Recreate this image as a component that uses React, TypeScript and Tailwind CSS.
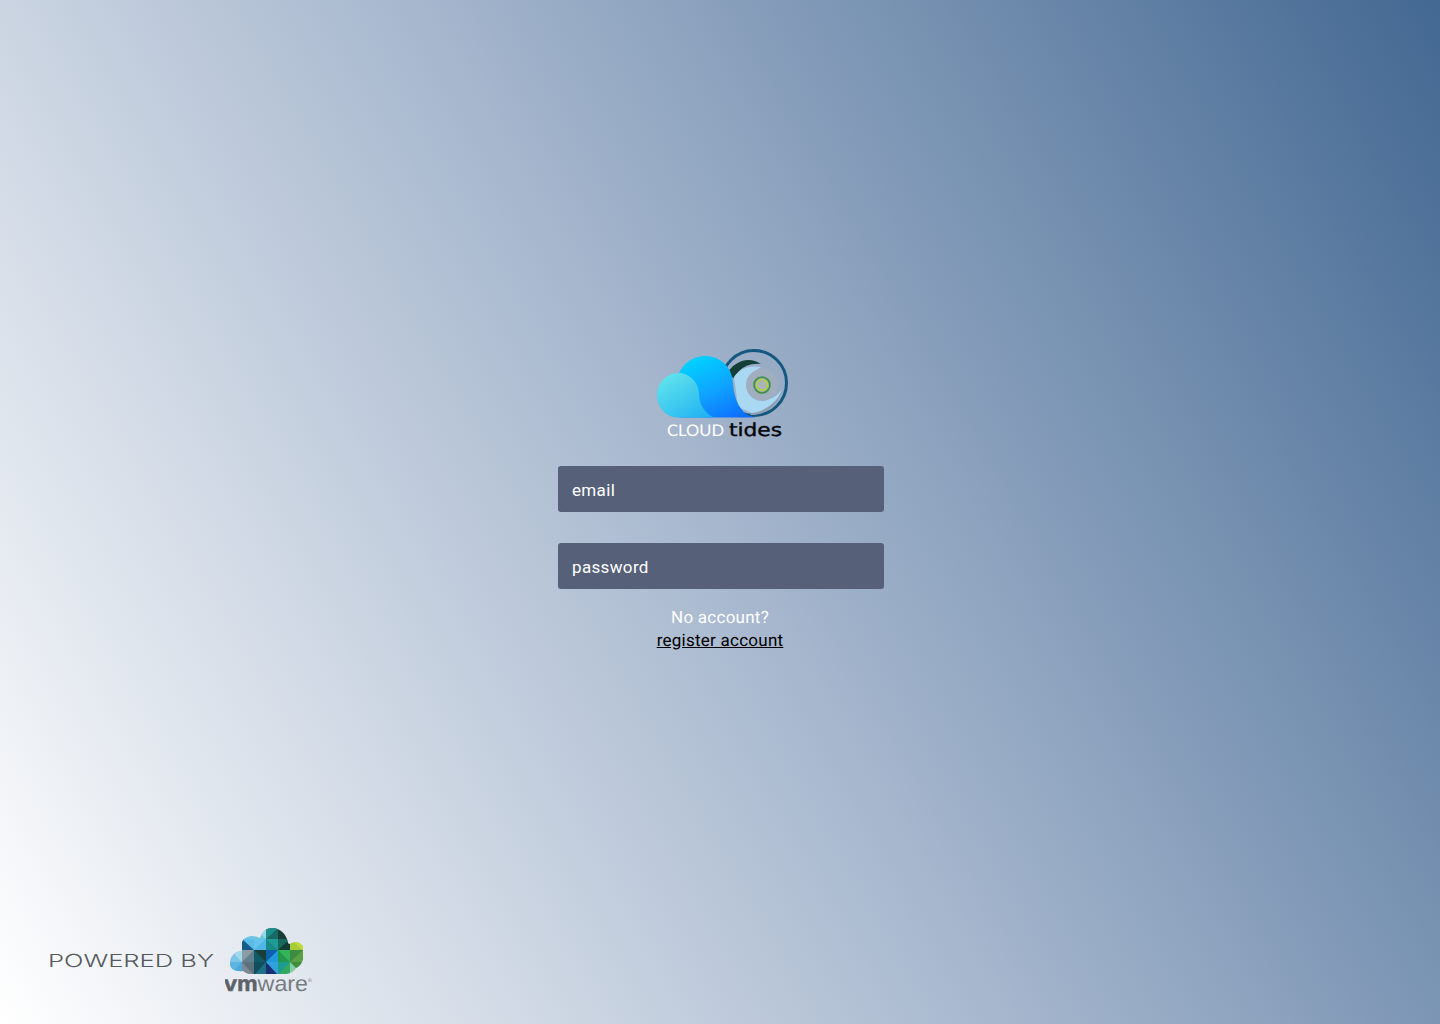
const vmCells: [number, number, string, string, boolean][] = [
  // col, row, first triangle, second triangle, split direction
  [1, 0, "#8fd0ea", "#6cc3e6", true],
  [2, 0, "#9ad6e4", "#6cc6dc", false],
  [3, 0, "#1d8f8a", "#176a68", true],
  [4, 0, "#1b4f48", "#173f38", false],
  [1, 1, "#5cbce8", "#155c8c", false],
  [2, 1, "#67c3ec", "#4fb6ea", true],
  [3, 1, "#1f9c96", "#1a8a86", false],
  [4, 1, "#17685e", "#123c34", true],
  [5, 1, "#c2d83f", "#a8cc38", false],
  [0, 2, "#a2d7ee", "#7cc4e8", false],
  [1, 2, "#8a9ca6", "#63808f", true],
  [2, 2, "#173f38", "#0e5c6a", false],
  [3, 2, "#0c62aa", "#1f9bdc", true],
  [4, 2, "#36b45a", "#24984c", false],
  [5, 2, "#3e8c42", "#5aa044", true],
  [0, 3, "#5cb6e2", "#4aa8da", true],
  [1, 3, "#5d717e", "#7c8a94", false],
  [2, 3, "#124f5c", "#1b6f86", true],
  [3, 3, "#33a2dc", "#1a2f72", false],
  [4, 3, "#1f9c90", "#33a860", true],
  [5, 3, "#3f8e40", "#86cca2", false],
];

function VmwareLogo() {
  const xs = [5, 17, 29, 41, 53, 65, 78];
  const ys = [6, 17, 28, 40, 53];
  return (
    <svg width="90" height="75" viewBox="0 0 90 75" className="block">
      <defs>
        <clipPath id="vm-cloud">
          <path d="M5 41C5 34 10 29 17 29C14 22 18 15 26 14C30 14 33 15 35 16C37 10 41 6 47 6C54 6 59 10 62 17C63 22 64 23 66 21C72 19 78 21 79 28C80 37 76 44 71 46C69 50 64 52 59 52H25C22 52 20 50 18 49C10 50 5 47 5 41Z" />
        </clipPath>
      </defs>
      <g clipPath="url(#vm-cloud)">
        {vmCells.map(([c, r, a, b, flip]) => {
          const x0 = xs[c];
          const x1 = xs[c + 1];
          const y0 = ys[r];
          const y1 = ys[r + 1];
          return (
            <g key={`${c}-${r}`}>
              <rect x={x0} y={y0} width={x1 - x0} height={y1 - y0} fill={b} />
              <polygon
                points={
                  flip
                    ? `${x0},${y0} ${x1},${y0} ${x0},${y1}`
                    : `${x0},${y0} ${x1},${y0} ${x1},${y1}`
                }
                fill={a}
              />
            </g>
          );
        })}
      </g>
      <text
        x="-1"
        y="69"
        fontFamily="'Liberation Sans', sans-serif"
        fontSize="22"
        fill="#777c81"
        textLength="84"
        lengthAdjust="spacingAndGlyphs"
      >
        <tspan fontWeight="700" fill="#5d6267" stroke="#5d6267" strokeWidth="0.5">
          vm
        </tspan>
        <tspan>ware</tspan>
      </text>
      <text x="83" y="60" fontFamily="'Liberation Sans', sans-serif" fontSize="5" fill="#777c81">
        ®
      </text>
    </svg>
  );
}

function CloudTidesLogo() {
  return (
    <svg width="145" height="100" viewBox="0 0 145 100" className="block">
      <defs>
        <linearGradient id="ct-big" x1="0.25" y1="0" x2="0.85" y2="1">
          <stop offset="0" stopColor="#00d2ff" />
          <stop offset="0.5" stopColor="#0fa4ff" />
          <stop offset="1" stopColor="#0d6bff" />
        </linearGradient>
        <linearGradient id="ct-small" x1="0.1" y1="0" x2="0.9" y2="1">
          <stop offset="0" stopColor="#64e6ec" />
          <stop offset="1" stopColor="#1fb2f2" />
        </linearGradient>
      </defs>
      {/* tide circle */}
      <circle cx="104" cy="38" r="32.5" fill="none" stroke="#14587f" strokeWidth="3" />
      <path d="M76 30C83 17 98 10 111 19C100 18 90 22 84 33Z" fill="#123f38" />
      <path
        d="M84 32C90 23 100 20 111 22C100 28 96 42 106 51C114 58 126 54 132 44C128 58 116 68 104 69L88 62Z"
        fill="#a9d9f2"
      />
      <path d="M100 70C116 71 130 58 133 42C130 54 118 66 102 68Z" fill="#8d9db0" />
      <circle cx="112" cy="40" r="16" fill="#a0aec0" />
      <circle cx="112" cy="40" r="8" fill="#8fa6be" stroke="#3f8f3f" strokeWidth="1.6" />
      <circle cx="112" cy="40" r="5.5" fill="#a9b4b8" stroke="#b5d13c" strokeWidth="1.6" />
      {/* cloud */}
      <path
        d="M27 50V39C27 22 41 11 55 11C71 11 83 23 83 39C84 52 90 72 107 72.5H29Z"
        fill="url(#ct-big)"
      />
      <path
        d="M28 28C40 28 49 38 49 49C49 60 55 68 64 72.5H28C16 72.5 7 62 7 50C7 38 17 28 28 28Z"
        fill="url(#ct-small)"
      />
      <text
        x="17"
        y="91"
        fontFamily="Lato, sans-serif"
        fontSize="16"
        fill="#ffffff"
        textLength="57"
        lengthAdjust="spacingAndGlyphs"
      >
        CLOUD
      </text>
      <text
        x="79"
        y="91"
        fontFamily="'DejaVu Sans', sans-serif"
        fontSize="18"
        fill="#05070a"
        stroke="#05070a"
        strokeWidth="0.4"
        textLength="53"
        lengthAdjust="spacingAndGlyphs"
      >
        tides
      </text>
    </svg>
  );
}

export default function App() {
  return (
    <div className="flex h-[1024px] w-full flex-col overflow-hidden bg-[linear-gradient(60deg,#ffffff_0%,#a5b6cd_50%,#436892_100%)] font-['Roboto',sans-serif] [text-rendering:geometricPrecision]">
      <div className="flex flex-col items-center pl-[2px] pt-[345px]">
        <div className="ml-[3px]">
          <CloudTidesLogo />
        </div>
        <form className="mt-[21px] flex w-[326px] flex-col gap-[31px]">
          <input
            placeholder="email"
            aria-label="email"
            className="h-[46px] w-full rounded-[3px] bg-[#566179] px-[14px] pt-[2px] text-[17px] tracking-[0.35px] text-white outline-none placeholder:text-white"
          />
          <input
            type="password"
            placeholder="password"
            aria-label="password"
            className="h-[46px] w-full rounded-[3px] bg-[#566179] px-[14px] pt-[2px] text-[17px] tracking-[0.35px] text-white outline-none placeholder:text-white"
          />
        </form>
        <div className="mt-[18px] flex w-[326px] flex-col items-center pr-[2px] text-[17px] leading-[23px] tracking-[0.25px]">
          <span className="text-white">No account?</span>
          <a href="#" className="text-black underline">
            register account
          </a>
        </div>
      </div>
      <div className="mt-auto flex items-center pb-[27px] pl-[48px]">
        <svg width="170" height="24" viewBox="0 0 170 24" className="block">
          <text
            x="0"
            y="19"
            fontFamily="Inter, sans-serif"
            fontWeight="300"
            fontSize="18"
            fill="#55595d"
            textLength="166"
            lengthAdjust="spacingAndGlyphs"
          >
            POWERED BY
          </text>
        </svg>
        <div className="ml-[7px]">
          <VmwareLogo />
        </div>
      </div>
    </div>
  );
}
